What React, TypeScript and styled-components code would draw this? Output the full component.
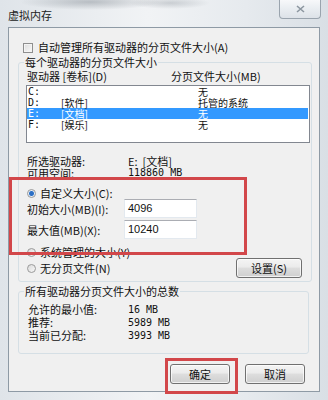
import styled, { createGlobalStyle } from 'styled-components'

const GlobalStyle = createGlobalStyle`
  html, body {
    margin: 0;
    padding: 0;
  }
  body {
    font-family: "Noto Sans CJK SC", "Liberation Sans", sans-serif;
    font-size: 11px;
    color: #111;
  }
  * {
    box-sizing: border-box;
  }
`

const Frame = styled.div`
  width: 328px;
  height: 400px;
  overflow: hidden;
  background:
    radial-gradient(ellipse 70px 8px at 90px 2px, rgba(90, 100, 110, 0.35), transparent),
    radial-gradient(ellipse 40px 6px at 170px 3px, rgba(90, 100, 110, 0.25), transparent),
    linear-gradient(90deg, #dfe4e9 0%, #f1f3f5 45%, #e6eaee 75%, #d9dfe5 100%);
  display: flex;
  flex-direction: column;
`

const TitleBar = styled.div`
  height: 27px;
  display: flex;
  justify-content: space-between;
  align-items: flex-start;
  padding-left: 8px;
`

const Title = styled.div`
  margin-top: 9px;
  line-height: 12px;
  color: #222;
`

const CloseButton = styled.div`
  width: 42px;
  height: 19px;
  margin-right: 7px;
  border: 1px solid #9aa4ae;
  border-top: none;
  border-radius: 0 0 4px 4px;
  background: linear-gradient(180deg, #f7f8fa 0%, #e9edf1 50%, #dde2e8 100%);
  display: flex;
  align-items: center;
  justify-content: center;
`

const Client = styled.div`
  margin: 0 8px;
  height: 365px;
  border: 1px solid #8e9aa5;
  background: #f0f0f0;
  display: flex;
  flex-direction: column;
`

const CheckRow = styled.label`
  margin-top: 14px;
  padding-left: 14px;
  height: 11px;
  line-height: 11px;
  display: flex;
  align-items: center;
  gap: 5px;
`

const CheckBox = styled.span`
  width: 10px;
  height: 10px;
  border: 1px solid #8f8f8f;
  background: linear-gradient(135deg, #dcdcdc, #fafafa);
  box-shadow: inset 0 0 0 1px #f4f4f4;
`

const Group = styled.fieldset<{ $width: number; $top: number; $pb: number }>`
  margin: ${p => p.$top}px 0 0 9px;
  width: ${p => p.$width}px;
  padding: 0 1px ${p => p.$pb}px 7px;
  border: 1px solid #d5dfe5;
  border-radius: 3px;
  min-width: 0;
`

const Legend = styled.legend`
  font-size: 11px;
  line-height: 12px;
  padding: 0 1px;
  margin-left: -2px;
`

const HeaderRow = styled.div`
  margin-top: 2px;
  height: 12px;
  line-height: 12px;
  padding-left: 1px;
  display: grid;
  grid-template-columns: 144px 1fr;
  margin-bottom: 3px;
`

const List = styled.div`
  height: 58px;
  border: 1px solid #828790;
  background: #fff;
  padding-right: 1px;
`

const ListRow = styled.div<{ $selected?: boolean }>`
  height: 11px;
  line-height: 11px;
  padding-left: 1px;
  display: grid;
  grid-template-columns: 33px 137px 1fr;
  background: ${p => (p.$selected ? '#3399ff' : 'transparent')};
  color: ${p => (p.$selected ? '#fff' : '#111')};
  font-size: 10px;
`

const Mono = styled.span`
  font-family: "DejaVu Sans Mono", "Liberation Mono", monospace;
  font-size: 10px;
`

const InfoRow = styled.div<{ $top?: number }>`
  margin-top: ${p => p.$top ?? 0}px;
  height: 12px;
  line-height: 12px;
  padding-left: 1px;
  display: grid;
  grid-template-columns: 101px 1fr;
`

const CustomSection = styled.div`
  position: relative;
  margin-top: 8px;
  &::after {
    content: '';
    position: absolute;
    left: -17px;
    top: -10px;
    width: 232px;
    height: 72px;
    border: 3px solid #d2474a;
  }
`

const RadioRow = styled.div<{ $top?: number }>`
  margin-top: ${p => p.$top ?? 0}px;
  height: 12px;
  line-height: 12px;
  display: flex;
  align-items: center;
  gap: 4px;
  padding-left: 1px;
`

const Radio = styled.span<{ $checked?: boolean }>`
  width: 9px;
  height: 9px;
  border-radius: 50%;
  border: 1px solid #9a9a9a;
  background: ${p =>
    p.$checked
      ? 'radial-gradient(circle, #2d6fc4 0 2px, #7fb0e8 2.5px, #e9eef4 3px)'
      : 'linear-gradient(135deg, #dadada, #f8f8f8)'};
`

const FieldRow = styled.div<{ $top: number }>`
  margin-top: ${p => p.$top}px;
  height: 19px;
  padding-left: 1px;
  display: grid;
  grid-template-columns: 97px 73px;
  align-items: center;
`

const Input = styled.div`
  height: 19px;
  border: 1px solid #e3e9ef;
  border-top-color: #abadb3;
  background: #fff;
  padding-left: 3px;
  line-height: 17px;
  font-family: "Liberation Sans", sans-serif;
  font-size: 11px;
`

const LastRow = styled.div`
  height: 20px;
  display: flex;
  align-items: center;
  justify-content: space-between;
  padding-right: 8px;
`

const Button = styled.div<{ $width: number }>`
  width: ${p => p.$width}px;
  height: 20px;
  border: 1px solid #707070;
  border-radius: 3px;
  background: linear-gradient(180deg, #f4f4f4 0%, #ebebeb 45%, #dddddd 50%, #cfcfcf 100%);
  box-shadow: inset 0 0 0 1px rgba(255, 255, 255, 0.7);
  display: flex;
  align-items: center;
  justify-content: center;
  line-height: 12px;
`

const TotalsBody = styled.div`
  padding-top: 6px;
`

const TotalRow = styled.div`
  height: 13px;
  line-height: 13px;
  padding-left: 2px;
  display: grid;
  grid-template-columns: 100px 1fr;
`

const ButtonBar = styled.div`
  margin-top: 10px;
  display: flex;
  justify-content: flex-end;
  gap: 15px;
  padding-right: 14px;
`

const Marked = styled.div`
  position: relative;
  &::after {
    content: '';
    position: absolute;
    left: -5px;
    top: -6px;
    width: 67px;
    height: 30px;
    border: 3px solid #d2474a;
  }
`

const drives = [
  { drive: 'C:', label: '', size: '无' },
  { drive: 'D:', label: '[软件]', size: '托管的系统' },
  { drive: 'E:', label: '[文档]', size: '无', selected: true },
  { drive: 'F:', label: '[娱乐]', size: '无' },
]

export default function App() {
  return (
    <>
      <GlobalStyle />
      <Frame>
        <TitleBar>
          <Title>虚拟内存</Title>
          <CloseButton>
            <svg width="9" height="8" viewBox="0 0 9 8">
              <path d="M1 1 L8 7 M8 1 L1 7" stroke="#8c96a0" strokeWidth="1.6" fill="none" />
            </svg>
          </CloseButton>
        </TitleBar>
        <Client>
          <CheckRow>
            <CheckBox />
            <span>自动管理所有驱动器的分页文件大小(A)</span>
          </CheckRow>

          <Group $width={294} $top={3} $pb={3}>
            <Legend>每个驱动器的分页文件大小</Legend>
            <HeaderRow>
              <span>驱动器 [卷标](D)</span>
              <span>分页文件大小(MB)</span>
            </HeaderRow>
            <List>
              {drives.map(d => (
                <ListRow key={d.drive} $selected={d.selected}>
                  <Mono>{d.drive}</Mono>
                  <span>{d.label}</span>
                  <span>{d.size}</span>
                </ListRow>
              ))}
            </List>
            <InfoRow $top={12}>
              <span>所选驱动器:</span>
              <span>E:&nbsp;&nbsp;[文档]</span>
            </InfoRow>
            <InfoRow>
              <span>可用空间:</span>
              <Mono>118860 MB</Mono>
            </InfoRow>

            <CustomSection>
              <RadioRow>
                <Radio $checked />
                <span>自定义大小(C):</span>
              </RadioRow>
              <FieldRow $top={0}>
                <span>初始大小(MB)(I):</span>
                <Input>4096</Input>
              </FieldRow>
              <FieldRow $top={2}>
                <span>最大值(MB)(X):</span>
                <Input>10240</Input>
              </FieldRow>
            </CustomSection>

            <RadioRow $top={7}>
              <Radio />
              <span>系统管理的大小(Y)</span>
            </RadioRow>
            <LastRow>
              <RadioRow>
                <Radio />
                <span>无分页文件(N)</span>
              </RadioRow>
              <Button $width={66}>设置(S)</Button>
            </LastRow>
          </Group>

          <Group $width={291} $top={3} $pb={11}>
            <Legend>所有驱动器分页文件大小的总数</Legend>
            <TotalsBody>
              <TotalRow>
                <span>允许的最小值:</span>
                <Mono>16 MB</Mono>
              </TotalRow>
              <TotalRow>
                <span>推荐:</span>
                <Mono>5989 MB</Mono>
              </TotalRow>
              <TotalRow>
                <span>当前已分配:</span>
                <Mono>3993 MB</Mono>
              </TotalRow>
            </TotalsBody>
          </Group>

          <ButtonBar>
            <Marked>
              <Button $width={60}>确定</Button>
            </Marked>
            <Button $width={60}>取消</Button>
          </ButtonBar>
        </Client>
      </Frame>
    </>
  )
}
